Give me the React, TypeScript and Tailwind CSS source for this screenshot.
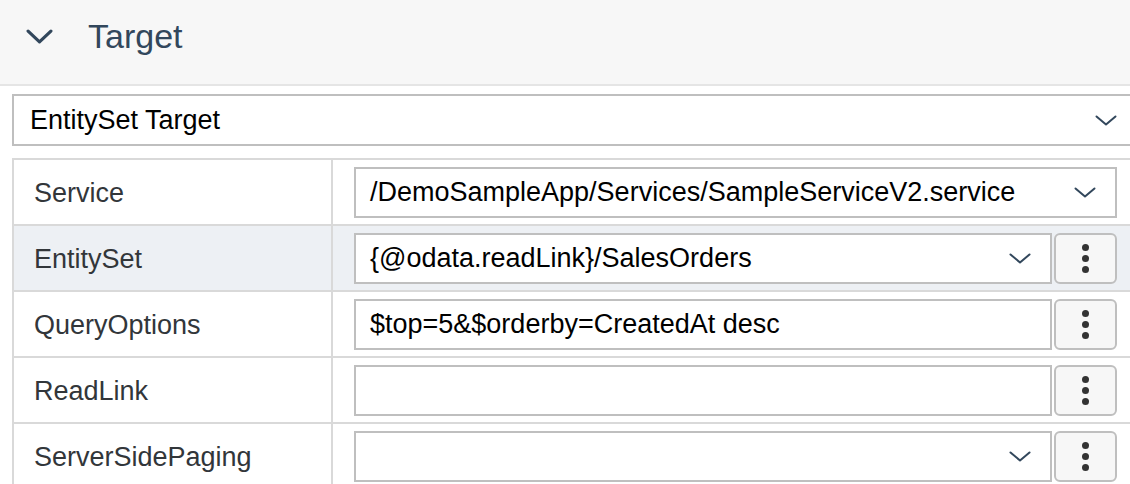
import React from "react";

type Row = {
  label: string;
  value: string;
  dropdown: boolean;
  more: boolean;
  active?: boolean;
};

const rows: Row[] = [
  { label: "Service", value: "/DemoSampleApp/Services/SampleServiceV2.service", dropdown: true, more: false },
  { label: "EntitySet", value: "{@odata.readLink}/SalesOrders", dropdown: true, more: true, active: true },
  { label: "QueryOptions", value: "$top=5&$orderby=CreatedAt desc", dropdown: false, more: true },
  { label: "ReadLink", value: "", dropdown: false, more: true },
  { label: "ServerSidePaging", value: "", dropdown: true, more: true },
];

const Chevron = ({ w = 22, h = 11, stroke = 2 }: { w?: number; h?: number; stroke?: number }) => (
  <svg width={w} height={h} viewBox={`0 0 ${w} ${h}`} fill="none" className="shrink-0">
    <path
      d={`M${stroke / 2 + 0.5} ${stroke / 2 + 0.5} L${w / 2} ${h - stroke / 2 - 0.5} L${w - stroke / 2 - 0.5} ${stroke / 2 + 0.5}`}
      stroke="#32475c"
      strokeWidth={stroke}
      strokeLinecap="round"
      strokeLinejoin="round"
    />
  </svg>
);

const MoreButton = () => (
  <button className="w-[63px] h-[51px] shrink-0 rounded-[6px] border-2 border-[#bfbfbf] bg-[#f7f7f7] flex flex-col items-center justify-center gap-[4px]">
    <span className="block w-[7px] h-[7px] rounded-full bg-[#333333]" />
    <span className="block w-[7px] h-[7px] rounded-full bg-[#333333]" />
    <span className="block w-[7px] h-[7px] rounded-full bg-[#333333]" />
  </button>
);

export default function App() {
  return (
    <div className="w-[1130px] h-[484px] overflow-hidden bg-white font-['Liberation_Sans',Arial,sans-serif]">
      {/* section header */}
      <div className="h-[86px] bg-[#f7f7f7] border-b-2 border-[#e5e5e5] flex items-center pl-[26px] pb-[12px] gap-[35px]">
        <Chevron w={27} h={15} stroke={3.2} />
        <span className="text-[34px] leading-none text-[#32475c]">Target</span>
      </div>

      {/* target type select */}
      <div className="ml-[12px] mt-[8px] w-[1125px] h-[52px] border-2 border-[#bfbfbf] flex items-center justify-between pl-[16px] pr-[18px]">
        <span className="text-[27px] leading-none text-black">EntitySet Target</span>
        <Chevron />
      </div>

      {/* properties table */}
      <div className="ml-[12px] mt-[12px] w-[1125px] border-l-2 border-t-2 border-[#d9d9d9]">
        {rows.map((r) => (
          <div
            key={r.label}
            className={`grid grid-cols-[319px_1fr] h-[66px] border-b-2 border-[#d9d9d9] ${r.active ? "bg-[#edf0f4]" : "bg-white"}`}
          >
            <div className="flex items-center pl-[20px] pt-[2px] border-r-2 border-[#d9d9d9] text-[27px] leading-none text-[#32363a]">
              {r.label}
            </div>
            <div className="flex items-center pl-[21px] pr-[20px] gap-[2px]">
              <div className="flex-1 h-[51px] border-2 border-[#bfbfbf] bg-white flex items-center justify-between pl-[14px] pr-[19px]">
                <span className="text-[27px] leading-none text-black whitespace-nowrap">{r.value}</span>
                {r.dropdown && <Chevron />}
              </div>
              {r.more && <MoreButton />}
            </div>
          </div>
        ))}
      </div>
    </div>
  );
}
